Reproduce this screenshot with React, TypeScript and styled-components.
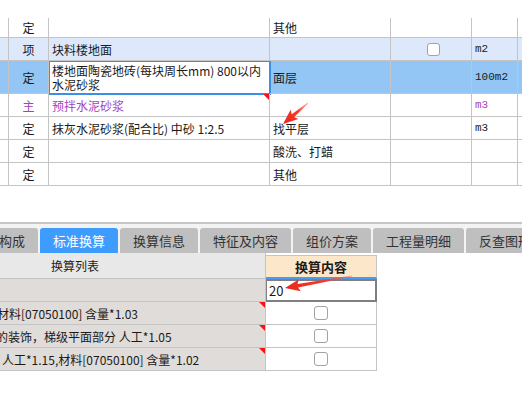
import React from 'react';
import styled, { createGlobalStyle, css } from 'styled-components';

const GlobalStyle = createGlobalStyle`
  body {
    margin: 0;
    background: #ffffff;
    font-family: 'Noto Sans CJK SC', 'Liberation Sans', sans-serif;
  }
`;

type RowKind = 'normal' | 'group' | 'selected' | 'main';

interface ITopRow {
  kind: RowKind;
  type: string;
  name?: string;
  part?: string;
  unit?: string;
  check?: boolean;
  height: number;
  mark?: boolean;
  editing?: boolean;
}

const topRows: ITopRow[] = [
  { kind: 'normal', type: '定', part: '其他', height: 20 },
  { kind: 'group', type: '项', name: '块料楼地面', check: true, unit: 'm2', height: 23 },
  {
    kind: 'selected',
    type: '定',
    name: '楼地面陶瓷地砖(每块周长mm) 800以内水泥砂浆',
    part: '面层',
    unit: '100m2',
    height: 33,
    editing: true,
  },
  { kind: 'main', type: '主', name: '预拌水泥砂浆', unit: 'm3', height: 23, mark: true },
  { kind: 'normal', type: '定', name: '抹灰水泥砂浆(配合比) 中砂 1:2.5', part: '找平层', unit: 'm3', height: 23 },
  { kind: 'normal', type: '定', part: '酸洗、打蜡', height: 23 },
  { kind: 'normal', type: '定', part: '其他', height: 23 },
];

const tabs = ['人材机构成', '标准换算', '换算信息', '特征及内容', '组价方案', '工程量明细', '反查图形工程量'];

interface IConvRow {
  text: string;
  indent: number;
  value?: string;
  mark?: boolean;
}

const convRows: IConvRow[] = [
  { text: '', indent: 0, value: '20' },
  { text: '材料[07050100] 含量*1.03', indent: -3, mark: true },
  { text: '的装饰，梯级平面部分 人工*1.05', indent: -4, mark: true },
  { text: '人工*1.15,材料[07050100] 含量*1.02', indent: 2, mark: true },
];

// arrow polygon from tail to tip
function arrowPoints(tx: number, ty: number, hx: number, hy: number) {
  const len = Math.hypot(hx - tx, hy - ty);
  const dx = (hx - tx) / len;
  const dy = (hy - ty) / len;
  const nx = -dy;
  const ny = dx;
  const hl = 13;
  const hw = 6;
  const bx = hx - dx * hl;
  const by = hy - dy * hl;
  const pts = [
    [tx + nx * 0.5, ty + ny * 0.5],
    [bx + nx * 1.8, by + ny * 1.8],
    [bx - dx * 2 + nx * hw, by - dy * 2 + ny * hw],
    [hx, hy],
    [bx - dx * 2 - nx * hw, by - dy * 2 - ny * hw],
    [bx - nx * 1.8, by - ny * 1.8],
    [tx - nx * 0.5, ty - ny * 0.5],
  ];
  return pts.map((p) => `${p[0].toFixed(1)},${p[1].toFixed(1)}`).join(' ');
}

export default function App() {
  return (
    <>
      <GlobalStyle />
      <Page>
        <TopGrid>
          {topRows.map((row, i) => (
            <TopRow key={i} kind={row.kind} style={{ height: row.height }}>
              <Cell />
              <TypeCell>{row.type}</TypeCell>
              {row.editing ? (
                <EditCell>{row.name}</EditCell>
              ) : (
                <Cell mark={row.mark}>{row.name}</Cell>
              )}
              <Cell>{row.part}</Cell>
              <CheckCell>{row.check && <CheckBox />}</CheckCell>
              <UnitCell>{row.unit}</UnitCell>
              <Cell />
            </TopRow>
          ))}
        </TopGrid>

        <Splitter />

        <TabBar>
          {tabs.map((t) => (
            <Tab key={t} active={t === '标准换算'}>
              {t}
            </Tab>
          ))}
        </TabBar>

        <ConvGrid>
          <ListHead>换算列表</ListHead>
          <ValueHead>换算内容</ValueHead>
          <Blank />
          {convRows.map((row, i) => (
            <React.Fragment key={i}>
              <ListCell mark={row.mark}>
                <ListText style={{ textIndent: row.indent }}>{row.text}</ListText>
              </ListCell>
              {row.value !== undefined ? (
                <ValueInput>{row.value}</ValueInput>
              ) : (
                <ValueCell>
                  <CheckBox big />
                </ValueCell>
              )}
              <Blank />
            </React.Fragment>
          ))}
        </ConvGrid>

        <Arrows width="522" height="414">
          <defs>
            <linearGradient id="a1" x1="308" y1="103" x2="283" y2="124" gradientUnits="userSpaceOnUse">
              <stop offset="0" stopColor="#ff6a5a" stopOpacity="0.5" />
              <stop offset="0.4" stopColor="#f53a2c" />
              <stop offset="1" stopColor="#e8281c" />
            </linearGradient>
            <linearGradient id="a2" x1="352" y1="276" x2="285" y2="288" gradientUnits="userSpaceOnUse">
              <stop offset="0" stopColor="#ff6a5a" stopOpacity="0.5" />
              <stop offset="0.4" stopColor="#f53a2c" />
              <stop offset="1" stopColor="#e8281c" />
            </linearGradient>
          </defs>
          <polygon points={arrowPoints(308, 103, 283, 124)} fill="url(#a1)" />
          <polygon points={arrowPoints(352, 276, 285, 288)} fill="url(#a2)" />
        </Arrows>
      </Page>
    </>
  );
}

const Page = styled.div`
  position: relative;
  width: 522px;
  height: 414px;
  overflow: hidden;
  background: #ffffff;
  color: #1a1a1a;
  font-size: 12px;
`;

const TopGrid = styled.div`
  margin-top: 18px;
`;

const rowColors: Record<RowKind, string> = {
  normal: '#ffffff',
  group: '#dde9fb',
  selected: '#93c6f5',
  main: '#ffffff',
};

const TopRow = styled.div<{ kind: RowKind }>`
  display: grid;
  grid-template-columns: 9px 40px 221px 121px 81px 46px 1fr;
  background: ${(p) => rowColors[p.kind]};
  color: ${(p) => (p.kind === 'main' ? '#a33fc2' : '#1a1a1a')};
`;

const redMark = css`
  &::after {
    content: '';
    position: absolute;
    top: 0;
    right: 0;
    border-top: 6px solid #ff1010;
    border-left: 6px solid transparent;
  }
`;

const Cell = styled.div<{ mark?: boolean }>`
  position: relative;
  display: flex;
  align-items: center;
  padding: 0 3px;
  border-right: 1px solid #c4c4c4;
  border-bottom: 1px solid #c4c4c4;
  white-space: nowrap;
  overflow: hidden;
  ${(p) => p.mark && redMark}
`;

const TypeCell = styled(Cell)`
  justify-content: center;
  padding: 0;
`;

const CheckCell = styled(Cell)`
  justify-content: center;
  padding: 0 0 0 5px;
`;

const UnitCell = styled(Cell)`
  font-family: 'Liberation Mono', 'DejaVu Sans Mono', monospace;
  font-size: 11px;
`;

const EditCell = styled.div`
  background: #ffffff;
  padding: 1px 4px 0 3px;
  line-height: 14px;
  border-bottom: 1px solid #c4c4c4;
  border-right: 1px solid #c4c4c4;
  outline: 2px solid #3d8ee8;
  outline-offset: -1px;
  display: flex;
  align-items: center;
  word-break: break-all;
`;

const CheckBox = styled.span<{ big?: boolean }>`
  display: block;
  width: ${(p) => (p.big ? 12 : 11)}px;
  height: ${(p) => (p.big ? 12 : 11)}px;
  border: 1px solid #a2a2a2;
  border-radius: 3px;
  background: #ffffff;
`;

const Splitter = styled.div`
  margin-top: 36px;
  height: 2px;
  background: #c6c6c6;
`;

const TabBar = styled.div`
  display: flex;
  gap: 2px;
  margin-left: -53px;
  padding-top: 4px;
  background: #f3f3f3;
`;

const Tab = styled.div<{ active?: boolean }>`
  flex-shrink: 0;
  height: 25px;
  padding: 0 13px;
  display: flex;
  align-items: center;
  white-space: nowrap;
  font-size: 13px;
  border-radius: 3px 3px 0 0;
  background: ${(p) => (p.active ? '#3f9cff' : '#bfbfbf')};
  color: ${(p) => (p.active ? '#ffffff' : '#333333')};
`;

const ConvGrid = styled.div`
  display: grid;
  grid-template-columns: 266px 111px 1fr;
  grid-template-rows: 26px repeat(4, 23px);
`;

const ListHead = styled.div`
  background: #e8e8e8;
  border-bottom: 1px solid #c4c4c4;
  border-right: 1px solid #c4c4c4;
  padding-left: 51px;
  display: flex;
  align-items: center;
  color: #222;
`;

const ValueHead = styled.div`
  align-self: end;
  height: 21px;
  background: #fde7cb;
  border-top: 1px solid #c4c4c4;
  border-right: 1px solid #c4c4c4;
  border-bottom: 2px solid #4a9cf0;
  display: flex;
  align-items: center;
  justify-content: center;
  font-weight: bold;
  font-size: 13px;
  color: #1a1a1a;
`;

const Blank = styled.div``;

const ListCell = styled.div<{ mark?: boolean }>`
  position: relative;
  background: #e0dcd9;
  border-right: 1px solid #c4c4c4;
  border-bottom: 1px solid #c4c4c4;
  display: flex;
  align-items: center;
  overflow: hidden;
  ${(p) => p.mark && redMark}
`;

const ListText = styled.div`
  white-space: nowrap;
  color: #1a1a1a;
`;

const ValueCell = styled.div`
  background: #ffffff;
  border-right: 1px solid #c4c4c4;
  border-bottom: 1px solid #c4c4c4;
  display: flex;
  align-items: center;
  justify-content: center;
`;

const ValueInput = styled.div`
  background: #ffffff;
  border: 2px solid #7f7f7f;
  border-left-width: 1px;
  padding-left: 2px;
  display: flex;
  align-items: center;
  font-size: 13px;
`;

const Arrows = styled.svg`
  position: absolute;
  left: 0;
  top: 0;
  pointer-events: none;
`;
